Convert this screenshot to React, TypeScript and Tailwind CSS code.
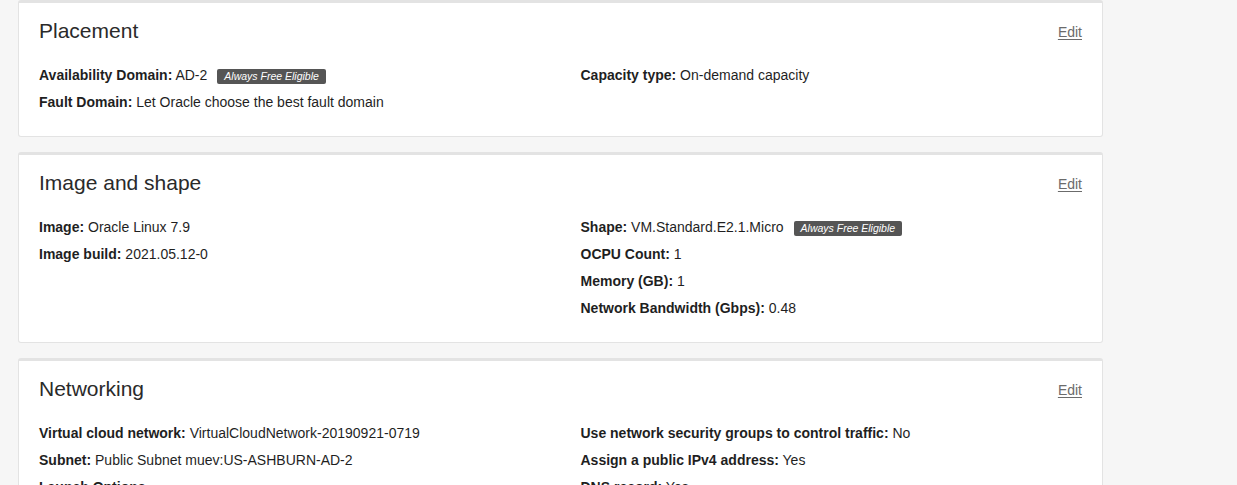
import React from "react";

type Row = { label: string; value?: string; badge?: boolean };

function Badge() {
  return (
    <span className="ml-[10px] inline-block rounded-[2px] bg-[#555555] px-[7px] align-[0px] text-[10.5px] leading-[15px] italic text-white">
      Always Free Eligible
    </span>
  );
}

function Item({ row }: { row: Row }) {
  return (
    <div className="text-[14px] leading-[27px] text-[#1f1f1f]">
      {row.value !== undefined ? (
        <>
          <span className="font-bold">{row.label}:</span> {row.value}
        </>
      ) : (
        <span className="font-bold">{row.label}</span>
      )}
      {row.badge && <Badge />}
    </div>
  );
}

function Card({ title, left, right }: { title: string; left: Row[]; right: Row[] }) {
  return (
    <div className="rounded-[3px] border border-t-[3px] border-[#e3e3e3] bg-white px-5 pb-[20px] pt-[14px]">
      <div className="flex items-center justify-between">
        <h2 className="text-[21px] leading-[28px] text-[#2a2a2a]">{title}</h2>
        <a className="mt-[2px] text-[14px] leading-[20px] text-[#6b6b6b] underline underline-offset-2">Edit</a>
      </div>
      <div className="mt-[17px] grid grid-cols-2 gap-x-10">
        <div>
          {left.map((r) => (
            <Item key={r.label} row={r} />
          ))}
        </div>
        <div>
          {right.map((r) => (
            <Item key={r.label} row={r} />
          ))}
        </div>
      </div>
    </div>
  );
}

export default function App() {
  return (
    <div
      className="min-h-screen bg-[#f6f6f6] pl-[18px]"
      style={{ fontFamily: '"Liberation Sans", Arial, sans-serif' }}
    >
      <div className="flex w-[1085px] flex-col gap-[15px] pb-6">
        <Card
          title="Placement"
          left={[
            { label: "Availability Domain", value: "AD-2", badge: true },
            { label: "Fault Domain", value: "Let Oracle choose the best fault domain" },
          ]}
          right={[{ label: "Capacity type", value: "On-demand capacity" }]}
        />
        <Card
          title="Image and shape"
          left={[
            { label: "Image", value: "Oracle Linux 7.9" },
            { label: "Image build", value: "2021.05.12-0" },
          ]}
          right={[
            { label: "Shape", value: "VM.Standard.E2.1.Micro", badge: true },
            { label: "OCPU Count", value: "1" },
            { label: "Memory (GB)", value: "1" },
            { label: "Network Bandwidth (Gbps)", value: "0.48" },
          ]}
        />
        <Card
          title="Networking"
          left={[
            { label: "Virtual cloud network", value: "VirtualCloudNetwork-20190921-0719" },
            { label: "Subnet", value: "Public Subnet muev:US-ASHBURN-AD-2" },
            { label: "Launch Options" },
          ]}
          right={[
            { label: "Use network security groups to control traffic", value: "No" },
            { label: "Assign a public IPv4 address", value: "Yes" },
            { label: "DNS record", value: "Yes" },
          ]}
        />
      </div>
    </div>
  );
}
